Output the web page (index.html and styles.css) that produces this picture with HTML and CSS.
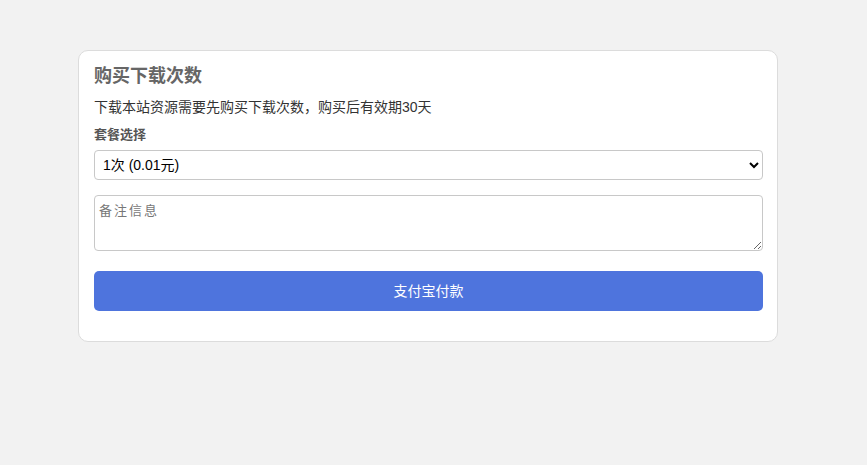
FILE: index.html
```html
<!DOCTYPE html>
<html lang="zh-CN">
<head>
<meta charset="utf-8">
<title>购买下载次数</title>
<link rel="stylesheet" href="styles.css">
</head>
<body>
<div class="card">
  <h2 class="title">购买下载次数</h2>
  <p class="desc">下载本站资源需要先购买下载次数，购买后有效期30天</p>
  <label class="label" for="pkg">套餐选择</label>
  <select id="pkg" class="select">
    <option>1次 (0.01元)</option>
  </select>
  <textarea class="note" placeholder="备注信息"></textarea>
  <button class="pay" type="button">支付宝付款</button>
</div>
</body>
</html>
```
FILE: styles.css
```css
html, body {
  margin: 0;
  padding: 0;
  background: #f2f2f2;
  font-family: "Liberation Sans", "Noto Sans CJK SC", sans-serif;
}
.card {
  width: 700px;
  box-sizing: border-box;
  margin: 50px 0 0 78px;
  background: #fff;
  border: 1px solid #dcdcdc;
  border-radius: 10px;
  padding: 12px 14px 30px 15px;
  display: flex;
  flex-direction: column;
}
.title {
  margin: 0;
  font-size: 18px;
  line-height: 26px;
  font-weight: bold;
  color: #666;
}
.desc {
  margin: 8px 0 0;
  font-size: 14px;
  line-height: 20px;
  color: #333;
}
.label {
  margin-top: 9px;
  font-size: 13px;
  line-height: 18px;
  color: #555;
  font-weight: bold;
}
.select {
  margin-top: 6px;
  height: 30px;
  width: 100%;
  box-sizing: border-box;
  border: 1px solid #c8c8c8;
  border-radius: 4px;
  background: #fff;
  padding: 0 4px;
  font-family: "Liberation Sans", "Noto Sans CJK SC", sans-serif;
  font-size: 14px;
  color: #000;
}
.note {
  margin-top: 15px;
  height: 56px;
  width: 100%;
  box-sizing: border-box;
  border: 1px solid #c8c8c8;
  border-radius: 4px;
  padding: 4px 4px;
  font-family: "Liberation Sans", "Noto Sans CJK SC", sans-serif;
  font-size: 13px;
  letter-spacing: 2px;
  resize: vertical;
}
.note::placeholder {
  color: #777;
}
.pay {
  margin-top: 20px;
  height: 40px;
  width: 100%;
  border: none;
  border-radius: 5px;
  background: #4e74dd;
  color: #fff;
  padding: 0 0 3px;
  font-family: "Liberation Sans", "Noto Sans CJK SC", sans-serif;
  font-size: 14px;
  cursor: pointer;
}
```
